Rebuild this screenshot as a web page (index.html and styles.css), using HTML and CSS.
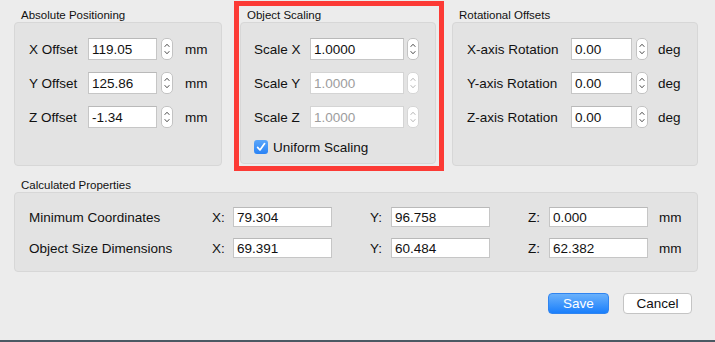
FILE: index.html
```html
<html>
<head>
  <meta charset="utf-8">
  <link rel="stylesheet" href="styles.css">
</head>
<body>
  <svg class="defs" width="0" height="0">
    <symbol id="chev" viewBox="0 0 12 22">
      <path d="M3.5 8 L6 5.3 L8.5 8" fill="none" stroke-width="1.2" stroke-linecap="round" stroke-linejoin="round"/>
      <path d="M3.5 14 L6 16.7 L8.5 14" fill="none" stroke-width="1.2" stroke-linecap="round" stroke-linejoin="round"/>
    </symbol>
  </svg>

  <div class="dialog">
    <div class="top-row">

      <div class="group group-abs">
        <div class="group-title">Absolute Positioning</div>
        <div class="panel">
          <div class="field-row">
            <label class="field-label">X Offset</label>
            <input class="num" value="119.05" readonly>
            <svg class="stepper"><use href="#chev"/></svg>
            <span class="unit">mm</span>
          </div>
          <div class="field-row">
            <label class="field-label">Y Offset</label>
            <input class="num" value="125.86" readonly>
            <svg class="stepper"><use href="#chev"/></svg>
            <span class="unit">mm</span>
          </div>
          <div class="field-row">
            <label class="field-label">Z Offset</label>
            <input class="num" value="-1.34" readonly>
            <svg class="stepper"><use href="#chev"/></svg>
            <span class="unit">mm</span>
          </div>
        </div>
      </div>

      <div class="highlight">
        <div class="group group-scale">
          <div class="group-title">Object Scaling</div>
          <div class="panel">
            <div class="field-row">
              <label class="field-label">Scale X</label>
              <input class="num" value="1.0000" readonly>
              <svg class="stepper"><use href="#chev"/></svg>
            </div>
            <div class="field-row">
              <label class="field-label">Scale Y</label>
              <input class="num" value="1.0000" disabled>
              <svg class="stepper off"><use href="#chev"/></svg>
            </div>
            <div class="field-row">
              <label class="field-label">Scale Z</label>
              <input class="num" value="1.0000" disabled>
              <svg class="stepper off"><use href="#chev"/></svg>
            </div>
            <div class="check-row">
              <span class="checkbox">
                <svg width="14" height="14" viewBox="0 0 14 14"><path d="M3.6 7.4 L6 10 L10.6 3.6" fill="none" stroke="#fff" stroke-width="1.7" stroke-linecap="round" stroke-linejoin="round"/></svg>
              </span>
              <label>Uniform Scaling</label>
            </div>
          </div>
        </div>
      </div>

      <div class="group group-rot">
        <div class="group-title">Rotational Offsets</div>
        <div class="panel">
          <div class="field-row">
            <label class="field-label">X-axis Rotation</label>
            <input class="num" value="0.00" readonly>
            <svg class="stepper"><use href="#chev"/></svg>
            <span class="unit">deg</span>
          </div>
          <div class="field-row">
            <label class="field-label">Y-axis Rotation</label>
            <input class="num" value="0.00" readonly>
            <svg class="stepper"><use href="#chev"/></svg>
            <span class="unit">deg</span>
          </div>
          <div class="field-row">
            <label class="field-label">Z-axis Rotation</label>
            <input class="num" value="0.00" readonly>
            <svg class="stepper"><use href="#chev"/></svg>
            <span class="unit">deg</span>
          </div>
        </div>
      </div>

    </div>

    <div class="group group-calc">
      <div class="group-title">Calculated Properties</div>
      <div class="panel">
        <div class="calc-row">
          <span class="calc-label">Minimum Coordinates</span>
          <span class="axis">X:</span><input class="calc" value="79.304" readonly>
          <span class="axis">Y:</span><input class="calc" value="96.758" readonly>
          <span class="axis">Z:</span><input class="calc" value="0.000" readonly>
          <span class="unit">mm</span>
        </div>
        <div class="calc-row">
          <span class="calc-label">Object Size Dimensions</span>
          <span class="axis">X:</span><input class="calc" value="69.391" readonly>
          <span class="axis">Y:</span><input class="calc" value="60.484" readonly>
          <span class="axis">Z:</span><input class="calc" value="62.382" readonly>
          <span class="unit">mm</span>
        </div>
      </div>
    </div>

    <div class="button-row">
      <button class="btn btn-save">Save</button>
      <button class="btn btn-cancel">Cancel</button>
    </div>
  </div>

  <div class="desktop-edge"></div>
</body>
</html>
```

FILE: styles.css
```css
body {
  margin: 0;
  height: 342px;
  display: flex;
  flex-direction: column;
  font-family: "Liberation Sans", Arial, sans-serif;
  font-size: 13.5px;
  color: #111;
  background-color: #ececec;
  overflow: hidden;
}

.defs {
  position: absolute;
}

.dialog {
  flex: 1;
  display: flex;
  flex-direction: column;
}

.top-row {
  display: flex;
  align-items: flex-start;
  padding-top: 1px;
  padding-left: 14px;
}

.group-title {
  font-size: 11.5px;
  line-height: 13px;
  padding-left: 7px;
  color: #111;
}

.panel {
  background-color: #e3e3e3;
  border: 1px solid #d7d7d7;
  border-radius: 4px;
}

.group-abs,
.group-rot {
  margin-top: 8px;
}

.group-abs .panel,
.group-rot .panel {
  padding: 15px 0 0 14px;
  box-sizing: border-box;
  height: 144px;
}

.group-abs {
  width: 208px;
}

.highlight {
  margin-left: 12px;
  border: 5px solid #fc3a35;
  padding: 3px 3px 2px 1px;
}

.group-scale {
  width: 196px;
}

.group-scale .panel {
  height: 142px;
  box-sizing: border-box;
  padding: 15px 0 0 13px;
}

.group-rot {
  margin-left: 8px;
  width: 246px;
}

.group-rot .panel {
  padding-left: 14px;
}

.field-row {
  display: flex;
  align-items: center;
  height: 22px;
  margin-bottom: 12px;
}

.field-label {
  flex: none;
}

.group-abs .field-label {
  width: 59px;
}

.group-scale .field-label {
  width: 56px;
}

.group-rot .field-label {
  width: 104px;
}

input {
  font-family: "Liberation Sans", Arial, sans-serif;
  font-size: 13.5px;
  color: #111;
  background-color: #fff;
  border: 1px solid #c6c6c6;
  border-top-color: #b9b9b9;
  margin: 0;
  padding: 0 0 0 3px;
  box-sizing: border-box;
  outline: none;
}

input:disabled {
  color: #9d9d9d;
  border-color: #d4d4d4;
}

.num {
  height: 22px;
}

.group-abs .num {
  width: 69px;
}

.group-scale .num {
  width: 94px;
}

.group-rot .num {
  width: 61px;
}

.stepper {
  flex: none;
  width: 12px;
  height: 22px;
  margin-left: 4px;
  box-sizing: border-box;
  background-color: #fff;
  border: 1px solid #c3c3c3;
  border-radius: 5px;
  stroke: #4a4a4a;
}

.group-scale .stepper {
  margin-left: 3px;
}

.stepper.off {
  stroke: #b5b5b5;
  border-color: #d6d6d6;
}

.group-abs .unit {
  margin-left: 12px;
}

.group-rot .unit {
  margin-left: 10px;
}

.check-row {
  display: flex;
  align-items: center;
  height: 14px;
}

.checkbox {
  width: 14px;
  height: 14px;
  border-radius: 3px;
  background: linear-gradient(#5aa6fa, #2a83f5);
  display: flex;
  margin-right: 5px;
}

.group-calc {
  margin: 8px 17px 0 14px;
}

.group-calc .panel {
  height: 80px;
  box-sizing: border-box;
  padding: 14px 0 0 14px;
}

.calc-row {
  display: flex;
  align-items: center;
  height: 20px;
  margin-bottom: 11px;
}

.calc-label {
  width: 183px;
}

.axis {
  width: 21px;
}

.calc {
  height: 20px;
  width: 99px;
  margin-right: 38px;
}

.calc-row .unit {
  margin-left: -27px;
}

.button-row {
  display: flex;
  justify-content: flex-end;
  gap: 14px;
  padding: 21px 23px 0 0;
}

.btn {
  height: 21px;
  font-family: "Liberation Sans", Arial, sans-serif;
  font-size: 13.5px;
  border-radius: 4px;
  padding: 0;
  cursor: pointer;
}

.btn-save {
  width: 61px;
  color: #fff;
  border: 1px solid #2f84f0;
  background: linear-gradient(#6ab1fb, #1a7ffc);
}

.btn-cancel {
  width: 69px;
  color: #111;
  background-color: #fff;
  border: 1px solid #c4c4c4;
}

.desktop-edge {
  height: 2px;
  background-color: #4b5963;
}
```
